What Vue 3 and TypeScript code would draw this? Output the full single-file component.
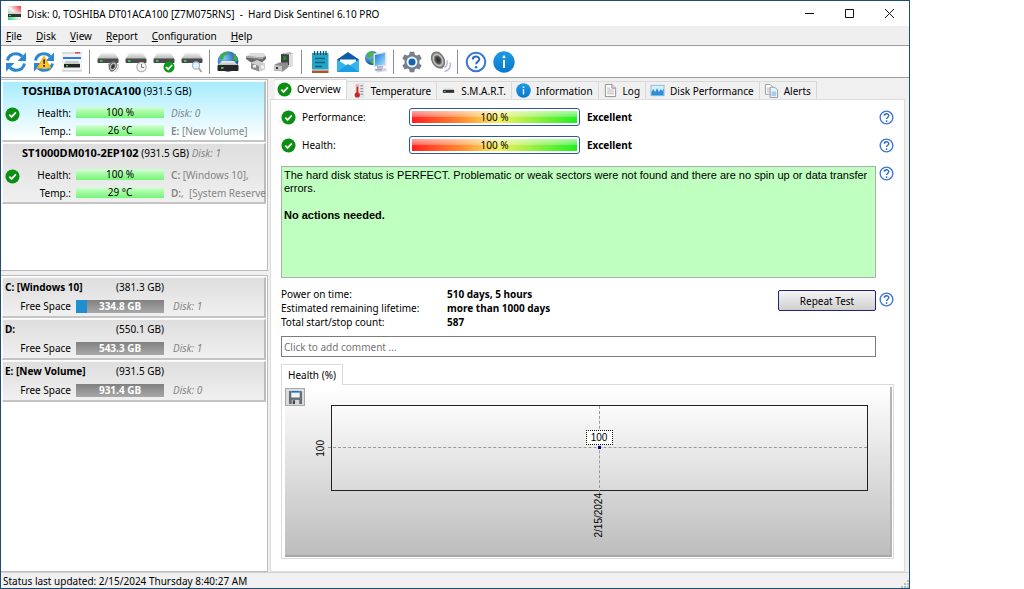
<script setup lang="ts">
interface Disk {
  name: string
  size: string
  note: string
  health: string
  temp: string
  line1: { lead: string; rest: string; italic: boolean }
  line2: { lead: string; rest: string; italic: boolean }
  selected: boolean
}
interface Volume {
  name: string
  size: string
  free: string
  used: number
  disk: string
}

const menus: string[] = ['File', 'Disk', 'View', 'Report', 'Configuration', 'Help']

const toolGroups: { icon: string; label: string }[][] = [
  [
    { icon: 'refresh', label: 'Refresh' },
    { icon: 'refresh-warn', label: 'Refresh with warning' },
    { icon: 'panel', label: 'Compact view' },
  ],
  [
    { icon: 'disk-sound', label: 'Acoustic management' },
    { icon: 'disk-clock', label: 'Short self test' },
    { icon: 'disk-ok', label: 'Extended self test' },
    { icon: 'disk-search', label: 'Surface test' },
  ],
  [
    { icon: 'disk-globe', label: 'Online information' },
    { icon: 'disk-plug', label: 'Hardware' },
    { icon: 'disk-dock', label: 'Device' },
  ],
  [
    { icon: 'notes', label: 'Report' },
    { icon: 'mail', label: 'Send report' },
    { icon: 'network', label: 'Remote status' },
  ],
  [
    { icon: 'gear', label: 'Configuration' },
    { icon: 'speaker', label: 'Sound' },
  ],
  [
    { icon: 'help', label: 'Help' },
    { icon: 'info', label: 'About' },
  ],
]

const disks: Disk[] = [
  {
    name: 'TOSHIBA DT01ACA100',
    size: '(931.5 GB)',
    note: '',
    health: '100 %',
    temp: '26 °C',
    line1: { lead: '', rest: 'Disk: 0', italic: true },
    line2: { lead: 'E:', rest: ' [New Volume]', italic: false },
    selected: true,
  },
  {
    name: 'ST1000DM010-2EP102',
    size: '(931.5 GB)',
    note: 'Disk: 1',
    health: '100 %',
    temp: '29 °C',
    line1: { lead: 'C:', rest: ' [Windows 10],', italic: false },
    line2: { lead: 'D:', rest: ',  [System Reserve', italic: false },
    selected: false,
  },
]

const volumes: Volume[] = [
  { name: 'C: [Windows 10]', size: '(381.3 GB)', free: '334.8 GB', used: 12, disk: 'Disk: 1' },
  { name: 'D:', size: '(550.1 GB)', free: '543.3 GB', used: 0, disk: 'Disk: 1' },
  { name: 'E: [New Volume]', size: '(931.5 GB)', free: '931.4 GB', used: 0, disk: 'Disk: 0' },
]

const tabs: { icon: string; label: string }[] = [
  { icon: 'ok', label: 'Overview' },
  { icon: 'thermo', label: 'Temperature' },
  { icon: 'drive', label: 'S.M.A.R.T.' },
  { icon: 'info', label: 'Information' },
  { icon: 'page', label: 'Log' },
  { icon: 'graph', label: 'Disk Performance' },
  { icon: 'pages', label: 'Alerts' },
]

const gauges: string[] = ['Performance:', 'Health:']

const facts: { label: string; value: string }[] = [
  { label: 'Power on time:', value: '510 days, 5 hours' },
  { label: 'Estimated remaining lifetime:', value: 'more than 1000 days' },
  { label: 'Total start/stop count:', value: '587' },
]
</script>

<template>
  <svg class="sprite" aria-hidden="true">
    <defs>
      <linearGradient id="g-top" x1="0" y1="0" x2="0" y2="1">
        <stop offset="0" stop-color="#f2f2f2" /><stop offset="1" stop-color="#b4b4b4" />
      </linearGradient>
      <linearGradient id="g-blue" x1="0" y1="0" x2="0" y2="1">
        <stop offset="0" stop-color="#1c9be4" /><stop offset="1" stop-color="#0a78cc" />
      </linearGradient>
      <linearGradient id="g-app" x1="0" y1="1" x2="1" y2="0">
        <stop offset="0" stop-color="#19d66b" /><stop offset="0.5" stop-color="#f4f8f4" /><stop offset="1" stop-color="#f43340" />
      </linearGradient>
      <radialGradient id="g-globe" cx="0.35" cy="0.35" r="0.7">
        <stop offset="0" stop-color="#79c6f6" /><stop offset="1" stop-color="#0b3f97" />
      </radialGradient>
      <linearGradient id="g-screen" x1="0" y1="0" x2="1" y2="1">
        <stop offset="0" stop-color="#1578d6" /><stop offset="1" stop-color="#a9e6ff" />
      </linearGradient>
      <radialGradient id="g-cone">
        <stop offset="0" stop-color="#222" /><stop offset="0.45" stop-color="#555" /><stop offset="0.7" stop-color="#c9c9c9" /><stop offset="1" stop-color="#555" />
      </radialGradient>
    </defs>
    <symbol id="i-app" viewBox="0 0 15 15">
      <rect x="1" y="0" width="13" height="14" fill="url(#g-app)" />
      <path d="M2 6h11l1 2H1z" fill="#d5d5d5" /><rect x="1" y="8" width="13" height="3" fill="#333" /><rect x="2" y="9" width="2" height="1" fill="#2fe04a" />
    </symbol>
    <symbol id="i-refresh" viewBox="0 0 22 22">
      <path d="M2.500 9.500C3.500 5 7 2.800 11 2.800c2.600 0 4.600 1 6.100 2.600" fill="none" stroke="#2c86d2" stroke-width="3" />
      <path d="M21 1.500V10h-8.500z" fill="#2c86d2" />
      <path d="M19.500 12.500C18.500 17 15 19.200 11 19.200c-2.600 0-4.600-1-6.100-2.600" fill="none" stroke="#2c86d2" stroke-width="3" />
      <path d="M1 20.500V12h8.500z" fill="#2c86d2" />
    </symbol>
    <symbol id="i-refresh-warn" viewBox="0 0 22 22">
      <use href="#i-refresh" width="22" height="22" />
      <path d="M11 5.500 17.500 17h-13z" fill="#ffc62b" stroke="#f5ac10" stroke-width="1.200" stroke-linejoin="round" />
      <path d="M10.200 8.500h1.800l-.3 4.500h-1.200zM10.200 14h1.700v1.700h-1.700z" fill="#222" />
    </symbol>
    <symbol id="i-panel" viewBox="0 0 22 22">
      <rect x="1" y="1" width="20" height="20" fill="#f1f2f4" /><rect x="1" y="1" width="20" height="2" fill="#d7d9dc" />
      <rect x="14" y="1" width="5" height="1.500" fill="#e04b4b" /><rect x="2" y="6" width="18" height="2" fill="#2d7fd0" />
      <path d="M5 10h12l2 3H3z" fill="#c9c9c9" /><rect x="3" y="13" width="16" height="3.500" fill="#242424" /><rect x="5" y="14" width="2" height="1.500" fill="#24d84a" />
      <rect x="1" y="19" width="20" height="1.500" fill="#cfd2d6" />
    </symbol>
    <symbol id="i-disk" viewBox="0 0 22 22">
      <path d="M4 2h14l3.500 6H.5z" fill="url(#g-top)" /><rect x=".5" y="7.500" width="21" height="4.500" rx="1" fill="#4a4a4a" /><rect x="3" y="9" width="2.500" height="1.800" fill="#2fd94a" />
    </symbol>
    <symbol id="i-disk-sound" viewBox="0 0 22 22">
      <use href="#i-disk" width="22" height="22" /><path d="M11 13l5-2.500 4 2-4 8-4-3z" fill="#9a9a9a" /><ellipse cx="16" cy="15.500" rx="3.300" ry="5" transform="rotate(28 16 15.500)" fill="url(#g-cone)" stroke="#707070" stroke-width=".8" /><path d="M21 13c.8 3-.6 6-3.500 8" fill="none" stroke="#aaa" />
    </symbol>
    <symbol id="i-disk-clock" viewBox="0 0 22 22">
      <use href="#i-disk" width="22" height="22" /><circle cx="16.500" cy="16" r="4.700" fill="#f4f4f4" stroke="#b4b4b4" stroke-width="1.200" /><path d="M16.500 13v3.500h2.500" fill="none" stroke="#777" />
    </symbol>
    <symbol id="i-disk-ok" viewBox="0 0 22 22">
      <use href="#i-disk" width="22" height="22" /><circle cx="16" cy="16" r="5.500" fill="#0c9a1c" /><path d="M13 16l2.200 2.200 4-4.200" fill="none" stroke="#fff" stroke-width="1.700" />
    </symbol>
    <symbol id="i-disk-search" viewBox="0 0 22 22">
      <use href="#i-disk" width="22" height="22" /><path d="M17.500 17l3 4" stroke="#c79a78" stroke-width="1.800" /><circle cx="15" cy="14.500" r="3.600" fill="#e4f2ff" stroke="#9db9d6" stroke-width="1.200" />
    </symbol>
    <symbol id="i-disk-globe" viewBox="0 0 22 22">
      <circle cx="11" cy="10.500" r="10.300" fill="url(#g-globe)" />
      <path d="M5 3c2-2 4-2 6-1.500L9.500 4l-2.500.5-1 3.500-2.500.5-1-2zM15 2c3 1 5 3.500 6 7l-2 2-2.500-3 .5-2.500z" fill="#39b13b" />
      <path d="M5 10h12l4.500 4.500H.5z" fill="url(#g-top)" /><rect x=".5" y="14" width="21" height="6" rx="1" fill="#262626" /><rect x="4" y="16" width="2.500" height="1.800" fill="#2fd94a" />
    </symbol>
    <symbol id="i-disk-plug" viewBox="0 0 22 22">
      <path d="M1 5l5-3h13l2 3-3 2H3z" fill="#dcdcdc" /><path d="M1 5l17 1.500L21 5v3l-4 3.500H6L1 8z" fill="#6a6a6a" /><path d="M1 5l17 1.500V8L1 6.500z" fill="#b5b5b5" />
      <path d="M6 12l6-3 8 3.500v6l-5 2-9-3z" fill="#cfcfcf" /><path d="M6 12l8 3v5.500l-8-3z" fill="#8d8d8d" /><rect x="8" y="14" width="3" height="2.500" fill="#eee" /><rect x="16" y="14.500" width="3" height="3" fill="#f2f2f2" />
    </symbol>
    <symbol id="i-disk-dock" viewBox="0 0 22 22">
      <path d="M9 2.500L17 1l3 1.500V15l-9 2z" fill="#b9b9b9" /><path d="M8 3l8 .5V14l-8 1z" fill="#3f423f" /><rect x="10" y="5" width="3.500" height="4" fill="#2c7f30" />
      <path d="M1 14l5-2.500h9v5l-5 4-9-1z" fill="#8c8c8c" /><path d="M1 14l8 1v5l-8-1z" fill="#c6c6c6" /><rect x="3" y="16" width="2" height="2" fill="#333" /><path d="M16 3.500l4-1V15l-4 1z" fill="#dedede" />
    </symbol>
    <symbol id="i-notes" viewBox="0 0 22 22">
      <rect x="3" y="2" width="16.500" height="17" fill="#27a3c4" /><rect x="3" y="19" width="16.500" height="3" fill="#a8572a" /><rect x="3" y="18.500" width="16.500" height="1" fill="#e7edf0" />
      <path d="M5.500 0v4M8.500 0v4M11.500 0v4M14.500 0v4M17 0v4" stroke="#16506a" stroke-width="1.300" /><path d="M6 7.500h10M6 11.500h10M6 15.500h7" stroke="#0c6386" stroke-width="1.400" />
    </symbol>
    <symbol id="i-mail" viewBox="0 0 22 22">
      <path d="M0 8.500 11 1l11 7.500V13H0z" fill="#0f5ca8" /><path d="M3 8.500h16v7H3z" fill="#f5fafd" /><path d="M0 8.500l11 7 11-7V21H0z" fill="#36b4ee" /><path d="M0 21l11-8 11 8z" fill="#1b9ee2" />
    </symbol>
    <symbol id="i-network" viewBox="0 0 22 22">
      <circle cx="7" cy="7" r="7" fill="url(#g-globe)" /><path d="M2 3c3-3 6-2 8-1L6 6 3 7zM5 9h5l-2 4-2-1z" fill="#45b83d" />
      <path d="M8.500 2.500L21.500.5v15l-13 .5z" fill="#e2e2ee" /><path d="M10 4l10-2v12l-10 .8z" fill="url(#g-screen)" /><path d="M12 15h6v3h-6z" fill="#b8b8ce" /><path d="M10 18l11-1 1 3-10 1.500z" fill="#d5d5e5" /><path d="M10 18h7v1.500h-7z" fill="#9f9fbc" />
    </symbol>
    <symbol id="i-gear" viewBox="0 0 22 22">
      <path d="M8.700.8h4.600l.6 3 1.500.8 3-1 2.300 4-2.300 2v2.800l2.300 2-2.300 4-3-1-1.500.8-.6 3H8.700l-.6-3-1.500-.8-3 1-2.300-4 2.300-2V9.600l-2.300-2 2.300-4 3 1 1.500-.8z" fill="#76818d" />
      <circle cx="11" cy="11" r="5.400" fill="#f5f7fa" /><circle cx="11" cy="11" r="3.500" fill="#1166b4" />
    </symbol>
    <symbol id="i-speaker" viewBox="0 0 22 22">
      <path d="M3 3l7-2.500 5 8.500-1 9-8-4z" fill="#a5a5a5" /><ellipse cx="9" cy="9" rx="6" ry="8.500" transform="rotate(-28 9 9)" fill="url(#g-cone)" stroke="#777" />
      <path d="M15.500 16.500c2.500-1.500 3-4.500 2.500-7M15.500 20.500c5-1 6.500-5 5.500-9" fill="none" stroke="#b3afd0" stroke-width="1.300" />
    </symbol>
    <symbol id="i-help" viewBox="0 0 22 22">
      <circle cx="11" cy="11" r="9.300" fill="#fff" stroke="#3b76d0" stroke-width="2" />
      <path d="M7.800 8.600c0-4 6.500-4.100 6.500-.3 0 2.300-3.200 2.400-3.200 5" fill="none" stroke="#2e69c4" stroke-width="2" /><circle cx="11.100" cy="16.200" r="1.300" fill="#2e69c4" />
    </symbol>
    <symbol id="i-info" viewBox="0 0 22 22">
      <circle cx="11" cy="11" r="10.700" fill="url(#g-blue)" /><circle cx="11" cy="6" r="1.400" fill="#fff" /><rect x="10" y="9" width="2" height="8" fill="#fff" />
    </symbol>
    <symbol id="i-ok" viewBox="0 0 16 16">
      <circle cx="8" cy="8" r="7.500" fill="#0a8f12" /><path d="M4.600 8.200l2.400 2.400 4.600-4.800" fill="none" stroke="#fff" stroke-width="1.800" />
    </symbol>
    <symbol id="i-thermo" viewBox="0 0 16 16">
      <rect x="6" y="0" width="8" height="16" fill="#dfe5ea" /><path d="M10 3h3M10 6h3M10 9h3M10 12h3" stroke="#888" />
      <rect x="5" y="1" width="3.500" height="10" rx="1.500" fill="#e7b0a8" /><rect x="6" y="4" width="1.600" height="8" fill="#c42a1f" /><circle cx="6.700" cy="12.700" r="2.800" fill="#c42a1f" />
    </symbol>
    <symbol id="i-drive" viewBox="0 0 16 16">
      <path d="M3 6h10l1 2H2z" fill="#c4c4c4" /><rect x="2" y="7.500" width="12" height="3" fill="#2f2f2f" /><rect x="3" y="8.500" width="2" height="1" fill="#2fd94a" />
    </symbol>
    <symbol id="i-page" viewBox="0 0 16 16">
      <path d="M2.500 1.500h7l4 4v9h-11z" fill="#fbfbfb" stroke="#8c8c8c" /><path d="M9.500 1.500v4h4" fill="#e4e4e4" stroke="#8c8c8c" /><path d="M4.500 7.500h7M4.500 9.500h7M4.500 11.500h7M4.500 5.500h3" stroke="#a9a9a9" stroke-width=".8" />
    </symbol>
    <symbol id="i-graph" viewBox="0 0 16 16">
      <rect x="1" y="2.500" width="14" height="11" fill="#d8effc" stroke="#8db9d6" /><path d="M1.500 9.500l2-3 2 3 2-4 2 4 2-3 1.500 2 1.500-3V13h-13z" fill="#2d8fd8" />
    </symbol>
    <symbol id="i-pages" viewBox="0 0 16 16">
      <path d="M1.500 1.500h5l2.500 2.500v8h-7.500z" fill="#fff" stroke="#9a9a9a" /><path d="M3 5.500h4M3 7.500h4M3 9.500h4" stroke="#aaa" stroke-width=".8" />
      <path d="M6.500 4.500h5l3 3v8h-8z" fill="#eaf3fd" stroke="#8e99a8" /><path d="M8 9h5v5H8z" fill="#a9cbee" />
    </symbol>
    <symbol id="i-save" viewBox="0 0 16 16">
      <path d="M1 1h13l1 1v13H1z" fill="#666c74" /><rect x="3.500" y="1" width="9" height="7" fill="#eef3f8" /><rect x="3.500" y="1" width="9" height="1.800" fill="#1773c4" /><rect x="4" y="10.500" width="8" height="4.500" fill="#d5d5d5" /><rect x="5" y="11" width="2.500" height="4" fill="#444" />
    </symbol>
  </svg>

  <div class="window">
    <header class="titlebar">
      <svg class="app-icon"><use href="#i-app" /></svg>
      <h1>Disk: 0, TOSHIBA DT01ACA100 [Z7M075RNS]&nbsp; -&nbsp; Hard Disk Sentinel 6.10 PRO</h1>
      <button class="win-btn" type="button" aria-label="Minimize"><svg viewBox="0 0 11 11"><path d="M1 5.500h9" /></svg></button>
      <button class="win-btn" type="button" aria-label="Maximize"><svg viewBox="0 0 11 11"><path d="M1.500 1.500h8v8h-8z" /></svg></button>
      <button class="win-btn" type="button" aria-label="Close"><svg viewBox="0 0 11 11"><path d="M1 1l9 9M10 1l-9 9" /></svg></button>
    </header>

    <nav class="menubar">
      <button v-for="m in menus" :key="m" type="button"><u>{{ m.charAt(0) }}</u>{{ m.slice(1) }}</button>
    </nav>

    <div class="toolbar" role="toolbar">
      <div v-for="(group, i) in toolGroups" :key="i" class="group">
        <button v-for="t in group" :key="t.icon" type="button" :aria-label="t.label">
          <svg><use :href="'#i-' + t.icon" /></svg>
        </button>
      </div>
    </div>

    <main class="body">
      <aside class="side">
        <section class="list disks">
          <article v-for="d in disks" :key="d.name" class="disk" :class="{ selected: d.selected }">
            <div class="disk-title"><b>{{ d.name }}</b> {{ d.size }} <i>{{ d.note }}</i></div>
            <svg class="ok"><use href="#i-ok" /></svg>
            <div class="meters">
              <span class="label">Health:</span>
              <span class="meter">{{ d.health }}</span>
              <span class="extra" :class="{ italic: d.line1.italic }"><b>{{ d.line1.lead }}</b>{{ d.line1.rest }}</span>
              <span class="label">Temp.:</span>
              <span class="meter">{{ d.temp }}</span>
              <span class="extra"><b>{{ d.line2.lead }}</b>{{ d.line2.rest }}</span>
            </div>
          </article>
        </section>
        <section class="list volumes">
          <article v-for="v in volumes" :key="v.name" class="volume">
            <div class="volume-title"><b>{{ v.name }}</b><span>{{ v.size }}</span></div>
            <div class="volume-row">
              <span class="label">Free Space</span>
              <span class="space"><span class="used" :style="{ width: v.used + '%' }"></span><b>{{ v.free }}</b></span>
              <i>{{ v.disk }}</i>
            </div>
          </article>
        </section>
      </aside>

      <section class="details">
        <div class="tabs" role="tablist">
          <button v-for="(t, i) in tabs" :key="t.label" type="button" role="tab" :aria-selected="i === 0" :class="{ active: i === 0 }">
            <svg><use :href="'#i-' + t.icon" /></svg>{{ t.label }}
          </button>
        </div>
        <div class="page">
          <div v-for="g in gauges" :key="g" class="line gauge-row">
            <div class="main">
              <svg class="ok"><use href="#i-ok" /></svg>
              <span class="gauge-label">{{ g }}</span>
              <span class="gauge"><span>100 %</span></span>
              <b>Excellent</b>
            </div>
            <button class="help" type="button" aria-label="Help"><svg><use href="#i-help" /></svg></button>
          </div>

          <div class="line status-row">
            <div class="main status">
              <p>The hard disk status is PERFECT. Problematic or weak sectors were not found and there are no spin up or data transfer errors.</p>
              <p><b>No actions needed.</b></p>
            </div>
            <button class="help" type="button" aria-label="Help"><svg><use href="#i-help" /></svg></button>
          </div>

          <div class="line facts-row">
            <div class="main">
              <dl>
                <template v-for="f in facts" :key="f.label"><dt>{{ f.label }}</dt><dd>{{ f.value }}</dd></template>
              </dl>
              <button class="repeat" type="button">Repeat Test</button>
            </div>
            <button class="help" type="button" aria-label="Help"><svg><use href="#i-help" /></svg></button>
          </div>

          <div class="line comment-row">
            <input class="main comment" type="text" aria-label="Comment" placeholder="Click to add comment ..." />
          </div>

          <div class="chart-tabs"><button type="button">Health (%)</button></div>
          <div class="chart-frame">
            <div class="chart">
              <button class="save" type="button" aria-label="Save chart"><svg><use href="#i-save" /></svg></button>
              <div class="y-axis"><span>100</span></div>
              <div class="plot">
                <div class="h-line"></div>
                <div class="v-line"></div>
                <div class="dot"></div>
                <div class="point">100</div>
              </div>
              <div class="x-axis"><span>2/15/2024</span></div>
            </div>
          </div>
        </div>
      </section>
    </main>

    <footer class="statusbar">
      <span>Status last updated: 2/15/2024 Thursday 8:40:27 AM</span>
      <svg class="grip" viewBox="0 0 9 9"><path d="M7 1h2v2H7zM4 4h2v2H4zM7 4h2v2H7zM1 7h2v2H1zM4 7h2v2H4zM7 7h2v2H7z" /></svg>
    </footer>
  </div>
</template>

<style>
html, body, #app { height: 100%; }
body { margin: 0; background: #fff; }
#app { box-sizing: border-box; padding-right: 114px; }
</style>

<style scoped>
* { box-sizing: border-box; }
.sprite { display: block; width: 0; height: 0; }
button, input { font: inherit; color: inherit; margin: 0; padding: 0; border: 0; background: none; border-radius: 0; }
h1, p, dl, dd { margin: 0; }
svg { display: block; flex: none; }
.window {
  display: flex;
  flex-direction: column;
  min-height: 100%;
  border: 1px solid #1d4d77;
  background: #f0f0f0;
  color: #000;
  font: 10px/14px "Noto Sans", "Open Sans", sans-serif;
}
.titlebar { display: flex; align-items: center; height: 25px; padding-left: 6px; background: #fff; }
.app-icon { width: 15px; height: 15px; }
.titlebar h1 { flex: 1; margin-left: 5px; font-size: 10px; font-weight: 400; white-space: nowrap; }
.win-btn { width: 40px; height: 25px; display: grid; place-items: center; }
.win-btn svg { width: 11px; height: 11px; fill: none; stroke: #111; }
.menubar { display: flex; gap: 14px; height: 19px; padding-left: 5px; background: #efefef; }
.toolbar { display: flex; align-items: center; height: 33px; padding-left: 1px; background: #fff; border-top: 1px solid #9c9c9c; border-bottom: 1px solid #9c9c9c; }
.group { display: flex; }
.group + .group::before { content: ""; width: 1px; height: 24px; margin: 2px 4px 2px 3px; background: #8c8c8c; }
.group button { width: 28px; height: 28px; display: grid; place-items: center; }
.group svg { width: 22px; height: 22px; }

.body { flex: 1; display: flex; min-height: 0; }
.side { flex: none; width: 267px; display: flex; flex-direction: column; gap: 4px; padding-top: 1px; }
.list { background: #fff; border: 1px solid #bcbcc0; border-left: 0; padding: 1px; }
.disks { height: 192px; }
.volumes { flex: 1; }
.disk, .volume { border: 1px solid #f8f8f8; border-right: 2px solid #bcbcbc; border-bottom: 2px solid #c4c4c4; background: linear-gradient(#dedede, #f0f0f0); }
.disk { display: grid; grid-template-columns: 19px 1fr; height: 61px; margin-bottom: 1px; white-space: pre; }
.disk.selected { background: linear-gradient(#a8ecff, #fff); }
.disk-title { grid-column: 2; line-height: 18px; }
.disk-title b { font-size: 11px; }
.disk .ok { width: 15px; height: 15px; margin: 6px 0 0 2px; }
.disk i, .volume i { color: #858585; }
.meters { display: grid; grid-template-columns: 49px 88px 1fr; column-gap: 5px; align-content: start; min-width: 0; align-items: center; grid-auto-rows: 18px; margin-top: 3px; }
.label { text-align: right; }
.meter { height: 11px; line-height: 11px; text-align: center; background: linear-gradient(#d2ffd2, #74f574); }
.extra { color: #858585; padding-left: 2px; min-width: 0; }
.extra b { font-weight: 600; }
.italic { font-style: italic; }
.volume { height: 41px; margin-bottom: 1px; padding-top: 1px; }
.volume-title { display: flex; justify-content: space-between; width: 159px; margin-left: 2px; line-height: 16px; }
.volume-row { display: flex; align-items: center; gap: 5px; height: 20px; margin-top: 1px; }
.volume-row .label { width: 68px; }
.volume-row i { margin-left: 4px; }
.space { position: relative; width: 88px; height: 13px; line-height: 13px; text-align: center; color: #fff; background: linear-gradient(#808080, #a8a8a8); }
.space b { position: relative; }
.used { position: absolute; left: 0; top: 0; bottom: 0; background: #1e90cf; }

.details { flex: 1; min-width: 0; margin-left: 2px; padding-right: 4px; display: flex; flex-direction: column; }
.tabs { display: flex; align-items: flex-end; height: 21px; padding-left: 5px; }
.tabs button { display: flex; align-items: center; gap: 5px; height: 18px; padding: 0 5px 0 4px; border: 1px solid #d9d9d9; border-left-width: 0; border-bottom: 0; white-space: nowrap; }
.tabs .active { height: 21px; margin-bottom: -1px; padding: 0 5px 2px 2px; background: #fff; }
.tabs svg { width: 15px; height: 15px; }
.page { flex: 1; background: #fff; border: 1px solid #dcdcdc; padding: 3px 10px 12px 10px; display: flex; flex-direction: column; }
.line { display: flex; gap: 3px; }
.main { flex: 1; min-width: 0; }
.help { width: 15px; height: 15px; flex: none; }
.help svg { width: 15px; height: 15px; }
.gauge-row { align-items: center; height: 28px; }
.gauge-row .main { display: flex; align-items: center; }
.gauge-row .ok { width: 15px; height: 15px; }
.gauge-label { width: 107px; margin-left: 6px; }
.gauge { width: 171px; height: 18px; margin-right: 7px; padding: 2px; border: 1px solid #2d5a93; border-radius: 3px; background: #fff; }
.gauge span {
  display: block; height: 12px; line-height: 12px; text-align: center;
  background: linear-gradient(rgba(255,255,255,.6), rgba(255,255,255,.3) 45%, transparent 55%), linear-gradient(90deg, #ff2020, #ff8a30 30%, #f4f060 52%, #90f040 75%, #20f020);
}
.status-row { margin-top: 7px; }
.status { height: 112px; padding: 2px 2px; border: 1px solid #adadad; background: #bfffbf; font: 11px/13px "Liberation Sans", Arial, sans-serif; }
.status p + p { margin-top: 14px; }
.facts-row { margin-top: 9px; }
.facts-row .main { display: flex; justify-content: space-between; align-items: flex-start; }
dl { display: grid; grid-template-columns: 166px auto; line-height: 14px; white-space: nowrap; }
dd { font-weight: 700; }
.repeat { width: 98px; height: 21px; margin-top: 3px; border: 1px solid #23237c; border-radius: 2px; background: linear-gradient(#f4f4f4, #cfcfcf); }
.facts-row .help { margin-top: 5px; }
.comment-row { margin-top: 7px; padding-right: 18px; }
.comment { height: 21px; padding: 0 2px; border: 1px solid #7c7c7c; background: #fff; }
.comment::placeholder { color: #757575; opacity: 1; }
.chart-tabs { display: flex; margin-top: 7px; }
.chart-tabs button { height: 21px; padding: 0 6px; border: 1px solid #dcdcdc; border-bottom: 0; background: #fff; margin-bottom: -1px; position: relative; }
.chart-frame { flex: 1; display: flex; border: 1px solid #dcdcdc; padding: 2px 1px 1px 3px; }
.chart {
  flex: 1; display: grid; grid-template-columns: 46px 1fr; grid-template-rows: 18px 86px 1fr; padding-right: 22px;
  border-right: 2px solid #b4b4b4; border-bottom: 2px solid #a8a8a8; background: linear-gradient(#fff, #bdbdbd);
  font: 10px/12px "Liberation Sans", Arial, sans-serif;
}
.save { grid-area: 1 / 1; width: 20px; height: 18px; margin-top: 1px; border: 1px solid #a8a8a8; background: #dcdcdc; display: grid; place-items: center; }
.save svg { width: 15px; height: 15px; }
.y-axis { grid-area: 2 / 1; display: flex; align-items: center; justify-content: flex-end; padding-right: 4px; }
.y-axis span, .x-axis span { writing-mode: vertical-rl; transform: rotate(180deg); }
.plot { grid-area: 2 / 2; position: relative; border: 1px solid #222; background: linear-gradient(#fbfbfb, #dadada); }
.h-line { position: absolute; left: -4px; right: 0; top: 49%; border-top: 1px dashed #999; }
.v-line { position: absolute; left: calc(50% - 1px); top: 0; bottom: -3px; border-left: 1px dashed #999; }
.dot { position: absolute; left: calc(50% - 1px); top: 49%; width: 3px; height: 3px; margin: -1px; background: #00008b; }
.point { position: absolute; left: calc(50% - 1px); bottom: 45px; width: 27px; height: 15px; margin-left: -13px; border: 1px dotted #111; background: #fff; text-align: center; line-height: 13px; }
.x-axis { grid-area: 3 / 2; display: flex; justify-content: center; align-items: flex-start; padding: 2px 1px 0 0; }
.statusbar { display: flex; justify-content: space-between; align-items: flex-end; height: 16px; padding-left: 2px; border-top: 1px solid #d2d2d2; line-height: 14px; }
.grip { width: 9px; height: 9px; fill: #bcbcbc; }
</style>
